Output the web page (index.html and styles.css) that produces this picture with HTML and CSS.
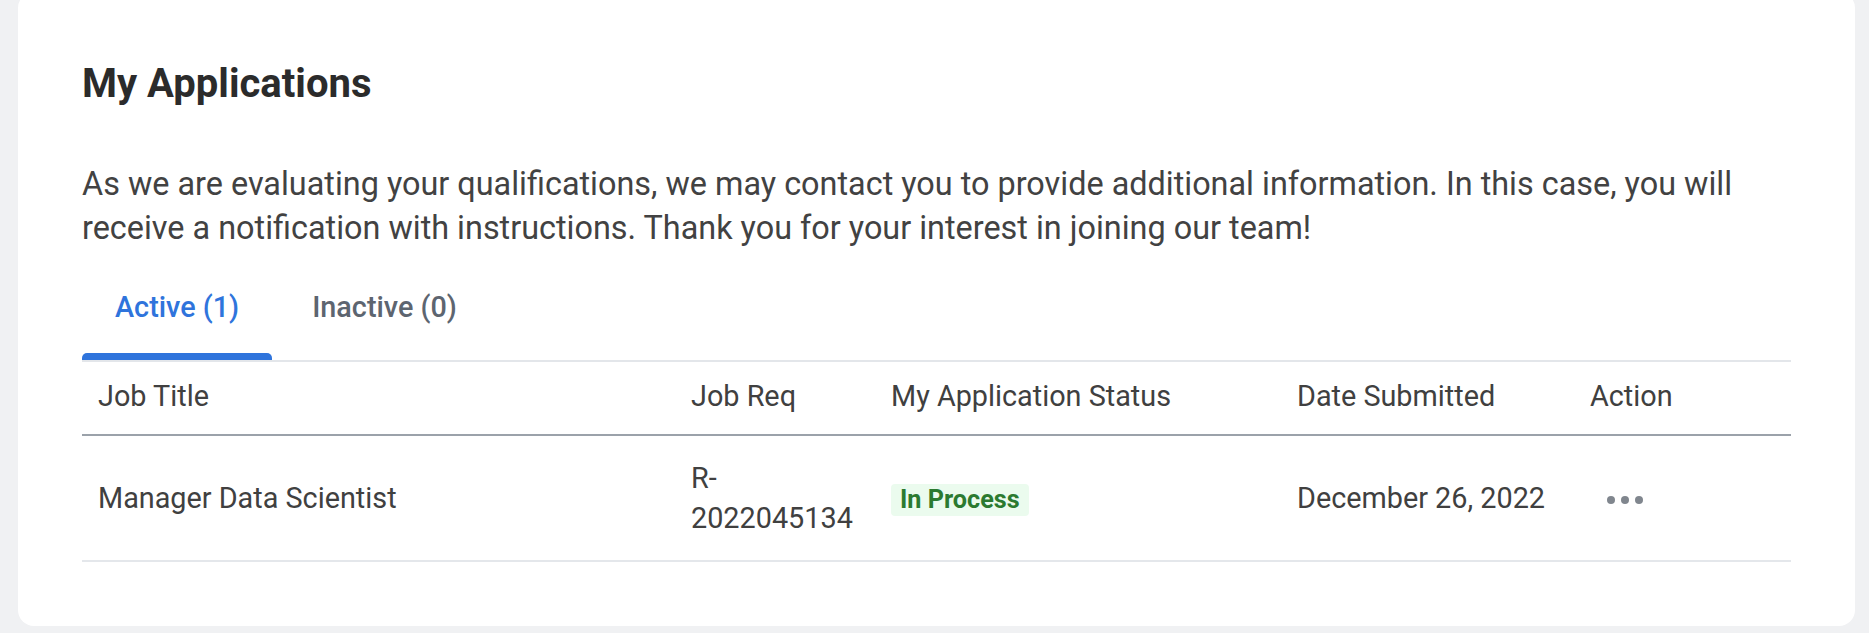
FILE: index.html
```html
<!DOCTYPE html>
<html lang="en">
<head>
<meta charset="utf-8">
<title>My Applications</title>
<link rel="stylesheet" href="styles.css">
</head>
<body>
<div class="page">
  <section class="card">
    <h1 class="title">My Applications</h1>
    <p class="intro">As we are evaluating your qualifications, we may contact you to provide additional information. In this case, you will receive a notification with instructions. Thank you for your interest in joining our team!</p>
    <div class="tabs">
      <div class="tab tab-active">
        <span class="tab-label">Active (1)</span>
        <span class="tab-bar"></span>
      </div>
      <div class="tab">
        <span class="tab-label">Inactive (0)</span>
        <span class="tab-bar"></span>
      </div>
    </div>
    <table class="apps">
      <colgroup>
        <col class="c-title">
        <col class="c-req">
        <col class="c-status">
        <col class="c-date">
        <col class="c-action">
      </colgroup>
      <thead>
        <tr>
          <th>Job Title</th>
          <th>Job Req</th>
          <th>My Application Status</th>
          <th>Date Submitted</th>
          <th>Action</th>
        </tr>
      </thead>
      <tbody>
        <tr>
          <td>Manager Data Scientist</td>
          <td>R-2022045134</td>
          <td><span class="badge">In Process</span></td>
          <td>December 26, 2022</td>
          <td><span class="more" aria-label="More actions"><i></i><i></i><i></i></span></td>
        </tr>
      </tbody>
    </table>
  </section>
</div>
</body>
</html>
```

FILE: styles.css
```css
html, body {
  margin: 0;
  padding: 0;
  background: #f0f1f3;
  font-family: Roboto, "Liberation Sans", Arial, sans-serif;
  color: #404040;
}

.page {
  height: 633px;
  box-sizing: border-box;
  padding: 0 14px 7px 18px;
  overflow: hidden;
}

.card {
  margin-top: -8px;
  background: #ffffff;
  border-radius: 16px;
  padding: 68px 64px 64px 64px;
}

.title {
  margin: 0;
  font-size: 40px;
  line-height: 48px;
  font-weight: 700;
  color: #2b2b2b;
}

.intro {
  margin: 54px 0 35px 0;
  font-size: 32.4px;
  line-height: 44px;
  color: #424242;
}

.tabs {
  display: flex;
  gap: 7px;
  border-bottom: 2px solid #e3e6ea;
}

.tab {
  display: flex;
  flex-direction: column;
  align-items: stretch;
}

.tab-label {
  padding: 0 33px;
  font-size: 28.8px;
  line-height: 44px;
  font-weight: 500;
  color: #5d6570;
  margin-bottom: 24px;
}

.tab-bar {
  height: 7px;
  border-radius: 5px 5px 0 0;
}

.tab-active .tab-label {
  color: #2f74dc;
}

.tab-active .tab-bar {
  background: #2f74dc;
}

.apps {
  width: 100%;
  border-collapse: collapse;
  table-layout: fixed;
  font-size: 28.8px;
}

.c-title { width: 593px; }
.c-req { width: 200px; }
.c-status { width: 406px; }
.c-date { width: 293px; }

.apps th {
  text-align: left;
  font-weight: 400;
  color: #404040;
  line-height: 44px;
  padding: 12px 16px 16px 16px;
  border-bottom: 2px solid #9ba2aa;
}

.apps td {
  line-height: 40px;
  padding: 22px 16px;
  color: #404040;
  vertical-align: middle;
  border-bottom: 2px solid #e4e7eb;
}

.badge {
  display: inline-block;
  vertical-align: middle;
  padding: 0 9px;
  font-size: 25.2px;
  line-height: 32px;
  font-weight: 700;
  color: #2b7a30;
  background: #ebfbee;
  border-radius: 4px;
}

.more {
  display: inline-flex;
  gap: 6px;
  margin-left: 17px;
  vertical-align: middle;
}

.more i {
  display: block;
  width: 8px;
  height: 8px;
  border-radius: 50%;
  background: #80868e;
}
```
